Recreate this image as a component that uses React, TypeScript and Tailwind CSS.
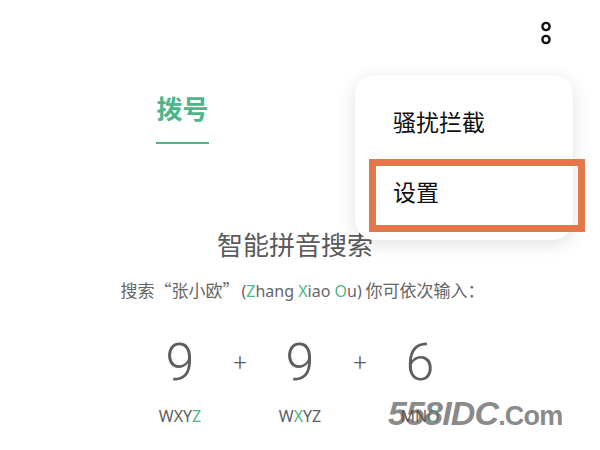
import React from 'react';

const font = { fontFamily: '"Roboto", "Noto Sans CJK SC", sans-serif' };
const latin = { fontFamily: '"Noto Sans", sans-serif' };

const App: React.FC = () => {
  return (
    <div className="w-[600px] h-[450px] bg-white relative overflow-hidden text-[#555]" style={font}>
      {/* top bar */}
      <div className="h-[64px] flex justify-end pt-[21px] pr-[48px]">
        <svg width="12" height="24" viewBox="0 0 12 24">
          <circle cx="6" cy="5.5" r="3.6" fill="none" stroke="#111" strokeWidth="2.4" />
          <circle cx="6" cy="18.5" r="3.6" fill="none" stroke="#111" strokeWidth="2.4" />
        </svg>
      </div>

      {/* tab */}
      <div className="pl-[156px]">
        <div className="w-[53px] flex flex-col items-center">
          <div className="text-[26px] leading-[40px] font-bold text-[#4cb689] mt-[26px]">拨号</div>
          <div className="w-[53px] h-[2px] bg-[#4cb689] mt-[12px]" />
        </div>
      </div>

      {/* content */}
      <div className="flex flex-col items-center pt-[85px]">
        <div className="text-[26px] leading-[34px] text-[#5a5a5a] -ml-[10px]">智能拼音搜索</div>
        <div className="text-[17px] leading-[20px] text-[#666] mt-[17px] ml-[5px]" style={{ fontFamily: '"Noto Sans CJK SC", sans-serif' }}>
          搜索“张小欧”<span className="text-[16px] pl-[2px]" style={latin}>(<span className="text-[#4cb689]">Z</span>hang <span className="text-[#4cb689]">X</span>iao <span className="text-[#4cb689]">O</span>u)</span> 你可依次输入：
        </div>
        <div className="flex mt-[32px] font-light text-[#5e5e5e]">
          <div className="w-[60px] text-center text-[52px] leading-[60px]">9</div>
          <div className="w-[60px] text-center text-[24px] leading-[60px]">+</div>
          <div className="w-[60px] text-center text-[52px] leading-[60px]">9</div>
          <div className="w-[60px] text-center text-[24px] leading-[60px]">+</div>
          <div className="w-[60px] text-center text-[52px] leading-[60px]">6</div>
        </div>
        <div className="flex mt-[13px] text-[16px] leading-[20px] text-[#5e5e5e]" style={latin}>
          <div className="w-[120px] text-center">WXY<span className="text-[#4cb689]">Z</span></div>
          <div className="w-[120px] text-center">W<span className="text-[#4cb689]">X</span>YZ</div>
          <div className="w-[120px] text-center">MN<span className="text-[#4cb689]">O</span></div>
        </div>
      </div>

      {/* popup menu */}
      <div className="absolute left-[355px] top-[75px] w-[218px] h-[165px] bg-white rounded-[20px] shadow-[0_4px_18px_rgba(0,0,0,0.12)] flex flex-col pl-[38px] pt-[34px] text-[#111]">
        <div className="text-[23px] leading-[30px]">骚扰拦截</div>
        <div className="text-[23px] leading-[30px] mt-[40px]">设置</div>
      </div>
      <div className="absolute left-[369px] top-[159px] w-[216px] h-[73px] border-[7px] border-[#e2774a]" />

      {/* watermark */}
      <div className="absolute left-[388px] top-[394px] text-[34px] leading-[38px] font-extrabold italic text-[#555]/70 tracking-tight" style={{ fontFamily: '"Liberation Sans", sans-serif' }}>
        558IDC<span className="text-[27px] not-italic font-bold">.Com</span>
      </div>
    </div>
  );
};

export default App;
